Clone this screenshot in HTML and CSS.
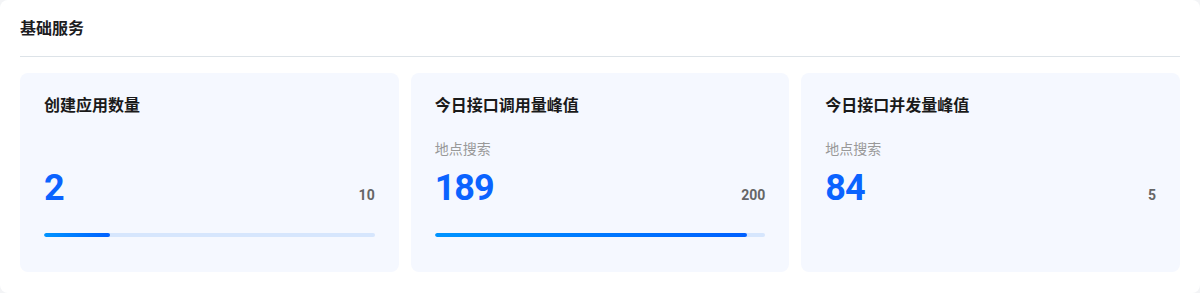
FILE: index.html
```html
<!DOCTYPE html>
<html lang="zh-CN">
<head>
  <meta charset="UTF-8" />
  <meta name="viewport" content="width=device-width, initial-scale=1.0"/>
  <title>基础服务</title>
  <link rel="stylesheet" href="styles.css">
</head>
<body>
  <div class="panel">
    <div class="panel-header">基础服务</div>

    <div class="stat-list">
      <div class="stat-card">
        <div class="stat-title">创建应用数量</div>
        <div class="stat-sub"></div>
        <div class="stat-row">
          <span class="stat-value">2</span>
          <span class="stat-limit">10</span>
        </div>
        <div class="bar"><div class="bar-fill" style="width:20%"></div></div>
      </div>

      <div class="stat-card">
        <div class="stat-title">今日接口调用量峰值</div>
        <div class="stat-sub">地点搜索</div>
        <div class="stat-row">
          <span class="stat-value">189</span>
          <span class="stat-limit">200</span>
        </div>
        <div class="bar"><div class="bar-fill" style="width:94.5%"></div></div>
      </div>

      <div class="stat-card">
        <div class="stat-title">今日接口并发量峰值</div>
        <div class="stat-sub">地点搜索</div>
        <div class="stat-row">
          <span class="stat-value">84</span>
          <span class="stat-limit">5</span>
        </div>
      </div>
    </div>
  </div>
</body>
</html>
```

FILE: styles.css
```css
* { box-sizing: border-box; }

body {
  margin: 0;
  background: #f3f4f6;
  font-family: Roboto, "Noto Sans CJK SC", sans-serif;
}

.panel {
  height: 293px;
  background: white;
  border-radius: 8px;
  padding: 0 20px;
}

.panel-header {
  padding-top: 16px;
  height: 57px;
  line-height: 22px;
  font-size: 16px;
  font-weight: 600;
  color: #1d1d1f;
  border-bottom: 1px solid #dde3e8;
  font-family: "Noto Sans CJK SC", sans-serif;
}

.stat-list {
  display: flex;
  gap: 12px;
  margin-top: 16px;
}

.stat-card {
  flex: 1;
  height: 199px;
  background: #f5f8ff;
  border-radius: 8px;
  padding: 20px 24px 0;
}

.stat-title {
  font-family: "Noto Sans CJK SC", sans-serif;
  font-size: 16px;
  font-weight: 700;
  line-height: 22px;
  color: #1a1a1a;
}

.stat-sub {
  font-family: "Noto Sans CJK SC", sans-serif;
  margin-top: 22px;
  height: 22px;
  line-height: 22px;
  font-size: 14px;
  color: #999;
}

.stat-row {
  display: flex;
  justify-content: space-between;
  align-items: baseline;
  margin-top: 9px;
  height: 40px;
}

.stat-value {
  font-size: 36px;
  line-height: 40px;
  font-weight: 700;
  letter-spacing: -1px;
  color: #0b63ff;
}

.stat-limit {
  font-size: 14px;
  font-weight: 700;
  color: #666;
}

.bar {
  margin-top: 25px;
  height: 4px;
  border-radius: 2px;
  background: #d6e6fd;
  overflow: hidden;
}

.bar-fill {
  height: 100%;
  border-radius: 2px;
  background: linear-gradient(to right, #0094ff, #0060ff);
}
```
